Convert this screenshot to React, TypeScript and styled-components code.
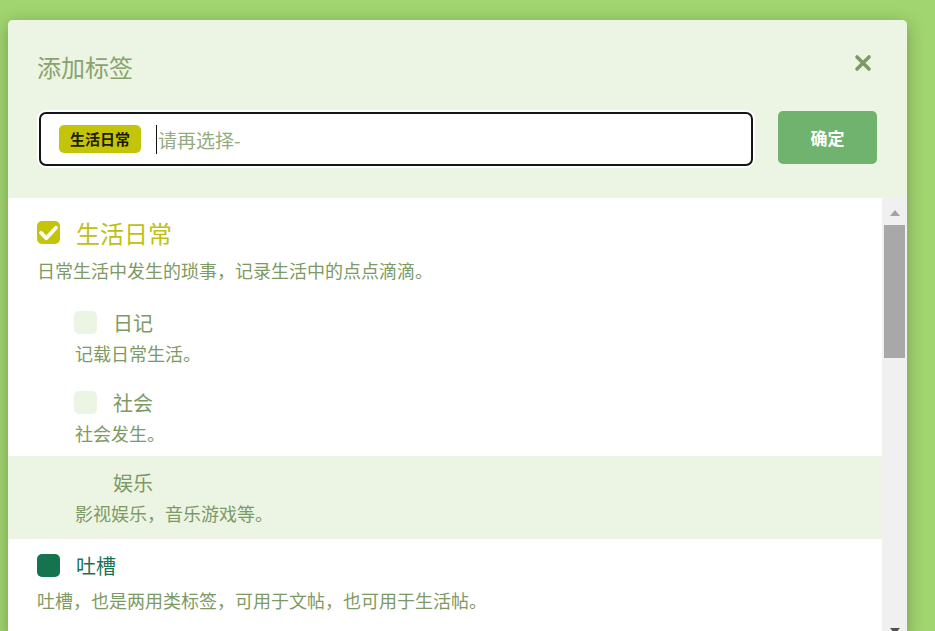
import React from 'react'
import styled, { createGlobalStyle } from 'styled-components'

const GlobalStyle = createGlobalStyle`
    html, body {
        margin: 0;
        padding: 0;
        height: 100%;
        overflow: hidden;
        background: #a1d56f;
        font-family: "Noto Sans CJK SC", "Noto Sans", sans-serif;
    }
`

const Page = styled.div`
    padding: 20px 0 0 8px;
`

const Modal = styled.div`
    width: 899px;
    border-radius: 5px;
    overflow: hidden;
    background: #fff;
    box-shadow: 0 4px 18px rgba(0, 0, 0, 0.28);
`

const Header = styled.div`
    background: #ecf5e4;
    padding: 30px 30px 30px 29px;
`

const TitleRow = styled.div`
    display: flex;
    align-items: center;
    justify-content: space-between;
    height: 34px;
    margin-bottom: 26px;
`

const Title = styled.h3`
    margin: 0;
    font-size: 24px;
    font-weight: 400;
    color: #8aa36e;
    line-height: 34px;
`

const CloseButton = styled.button`
    border: none;
    background: none;
    padding: 0;
    margin-right: 4px;
    margin-top: -8px;
    width: 20px;
    height: 20px;
    cursor: pointer;
    display: flex;
`

const InputRow = styled.div`
    display: flex;
    align-items: flex-start;
    gap: 23px;
`

const InputBox = styled.div`
    flex: 1;
    height: 50px;
    margin: 2px;
    border: 2px solid #151515;
    border-radius: 7px;
    box-shadow: 0 0 0 2px #fff;
    background: #fff;
    display: flex;
    align-items: center;
    padding: 0 18px;
    gap: 15px;
`

const Chip = styled.span`
    background: #c4c40a;
    color: #1c1c00;
    font-size: 15px;
    font-weight: 700;
    height: 28px;
    line-height: 28px;
    padding: 0 11px;
    border-radius: 5px;
`

const Caret = styled.span`
    width: 1px;
    height: 29px;
    background: #111;
    margin-right: -14px;
`

const Placeholder = styled.span`
    font-size: 19px;
    color: #94aa80;
`

const ConfirmButton = styled.button`
    width: 99px;
    height: 53px;
    margin-top: 1px;
    border: none;
    border-radius: 5px;
    background: #70b36f;
    color: #fff;
    font-family: inherit;
    font-size: 17px;
    font-weight: 700;
    cursor: pointer;
`

const Body = styled.div`
    display: flex;
    height: 440px;
`

const List = styled.div`
    flex: 1;
    padding-top: 6px;
    overflow: hidden;
`

const Item = styled.div<{ $sub?: boolean; $hover?: boolean }>`
    padding: ${(p) => (p.$sub ? '12px 0 12px 66px' : '12px 0 14px 29px')};
    background: ${(p) => (p.$hover ? '#ecf5e4' : 'transparent')};

    &:first-child {
        padding-top: ${(p) => (p.$sub ? '12px' : '11px')};
    }

    &:last-child {
        padding-bottom: ${(p) => (p.$sub ? '15px' : '14px')};
    }
`

const ItemHead = styled.div`
    display: flex;
    align-items: center;
    gap: 16px;
`

const Check = styled.span<{ $color: string }>`
    width: 23px;
    height: 23px;
    border-radius: 5px;
    background: ${(p) => p.$color};
    display: flex;
    align-items: center;
    justify-content: center;
    flex-shrink: 0;
`

const Label = styled.span<{ $color: string; $size: number }>`
    font-size: ${(p) => p.$size}px;
    line-height: ${(p) => Math.round(p.$size * 1.45)}px;
    color: ${(p) => p.$color};
`

const Desc = styled.div<{ $sub?: boolean }>`
    margin-top: ${(p) => (p.$sub ? '5px' : '9px')};
    margin-left: ${(p) => (p.$sub ? '1px' : '0')};
    font-size: 18px;
    line-height: 22px;
    color: #7d9a64;
`

const SubList = styled.div`
    margin-top: 15px;
    margin-left: -29px;
    margin-bottom: -14px;
`

const Scrollbar = styled.div`
    width: 25px;
    background: #f0f0f0;
    display: flex;
    flex-direction: column;
    align-items: center;
    padding: 2px 0 4px;
`

const ArrowUp = styled.div`
    width: 0;
    height: 0;
    margin: 10px 0 9px;
    border-left: 5px solid transparent;
    border-right: 5px solid transparent;
    border-bottom: 6px solid #a3a3a3;
`

const ArrowDown = styled.div`
    width: 0;
    height: 0;
    margin-top: auto;
    border-left: 5px solid transparent;
    border-right: 5px solid transparent;
    border-top: 6px solid #505050;
`

const Thumb = styled.div`
    width: 21px;
    height: 133px;
    background: #a8a8a8;
`

type Tag = {
    name: string
    desc: string
    box: string
    color: string
    size: number
    checked?: boolean
    hover?: boolean
    children?: Tag[]
}

const tags: Tag[] = [
    {
        name: '生活日常',
        desc: '日常生活中发生的琐事，记录生活中的点点滴滴。',
        box: '#c4c40a',
        color: '#c0c011',
        size: 24,
        checked: true,
        children: [
            { name: '日记', desc: '记载日常生活。', box: '#ecf5e4', color: '#7d9a64', size: 20 },
            { name: '社会', desc: '社会发生。', box: '#ecf5e4', color: '#7d9a64', size: 20 },
            { name: '娱乐', desc: '影视娱乐，音乐游戏等。', box: '#ecf5e4', color: '#7d9a64', size: 20, hover: true },
        ],
    },
    {
        name: '吐槽',
        desc: '吐槽，也是两用类标签，可用于文帖，也可用于生活帖。',
        box: '#157350',
        color: '#177355',
        size: 20,
    },
]

function TagRow({ tag, sub }: { tag: Tag; sub?: boolean }) {
    return (
        <Item $sub={sub} $hover={tag.hover}>
            <ItemHead>
                <Check $color={tag.box}>
                    {tag.checked && (
                        <svg width="21" height="21" viewBox="0 0 24 24">
                            <polyline points="3.5,12.5 9.5,18.5 20.5,6.5" fill="none" stroke="#fff" strokeWidth="4.4" strokeLinecap="round" strokeLinejoin="round" />
                        </svg>
                    )}
                </Check>
                <Label $color={tag.color} $size={tag.size}>{tag.name}</Label>
            </ItemHead>
            <Desc $sub={sub}>{tag.desc}</Desc>
            {tag.children && (
                <SubList>
                    {tag.children.map((c) => (
                        <TagRow key={c.name} tag={c} sub />
                    ))}
                </SubList>
            )}
        </Item>
    )
}

export default function App() {
    return (
        <Page>
            <GlobalStyle />
            <Modal>
                <Header>
                    <TitleRow>
                        <Title>添加标签</Title>
                        <CloseButton aria-label="close">
                            <svg width="20" height="20" viewBox="0 0 20 20">
                                <path d="M4 4 L16 16 M16 4 L4 16" stroke="#7d9a64" strokeWidth="3.6" strokeLinecap="round" />
                            </svg>
                        </CloseButton>
                    </TitleRow>
                    <InputRow>
                        <InputBox>
                            <Chip>生活日常</Chip>
                            <Caret />
                            <Placeholder>请再选择-</Placeholder>
                        </InputBox>
                        <ConfirmButton>确定</ConfirmButton>
                    </InputRow>
                </Header>
                <Body>
                    <List>
                        {tags.map((t) => (
                            <TagRow key={t.name} tag={t} />
                        ))}
                    </List>
                    <Scrollbar>
                        <ArrowUp />
                        <Thumb />
                        <ArrowDown />
                    </Scrollbar>
                </Body>
            </Modal>
        </Page>
    )
}
